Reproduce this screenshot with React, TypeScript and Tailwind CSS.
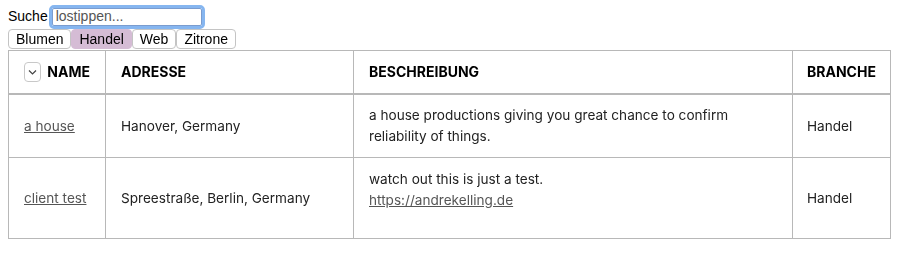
import { useState } from 'react';

interface Client {
  id: string;
  name: string;
  address: string;
  description: string;
  url?: string;
  branch: string;
}

const clients: Client[] = [
  {
    id: '1',
    name: 'a house',
    address: 'Hanover, Germany',
    description: 'a house productions giving you great chance to confirm reliability of things.',
    branch: 'Handel',
  },
  {
    id: '2',
    name: 'client test',
    address: 'Spreestraße, Berlin, Germany',
    description: 'watch out this is just a test.',
    url: 'https://andrekelling.de',
    branch: 'Handel',
  },
];

const branches = ['Blumen', 'Handel', 'Web', 'Zitrone'];

export default function App() {
  const [active, setActive] = useState('Handel');

  return (
    <div className="p-2 pt-[6px] text-[14px] text-black font-['Liberation_Sans',Arial,sans-serif]">
      <div className="flex items-center gap-[4px] h-[21px]">
        <label>Suche</label>
        <input
          className="w-[150px] h-[18px] px-[3px] text-[14px] border border-[#7a9ccf] outline outline-[3px] outline-[#86b6f0] rounded-[2px] placeholder:text-[#555]"
          placeholder="lostippen..."
          autoFocus
        />
      </div>
      <div className="flex mt-[2px] mb-px">
        {branches.map((b) => (
          <button
            key={b}
            onClick={() => setActive(b)}
            className={`h-[20px] px-[7px] border border-[#c4c4c4] rounded-[4px] leading-none text-[14px] ${
              active === b ? 'bg-[#d5bcd5] border-[#d5bcd5]' : 'bg-white'
            }`}
          >
            {b}
          </button>
        ))}
      </div>
      <table className="w-[882px] table-fixed border-collapse font-['Inter',sans-serif] text-[13.6px] text-[#222]">
        <colgroup>
          <col className="w-[97px]" />
          <col className="w-[248px]" />
          <col className="w-[439px]" />
          <col className="w-[98px]" />
        </colgroup>
        <thead>
          <tr className="h-[43px] border-b-2 border-[#b8b8b8] text-[14px] font-bold text-black">
            <th className="border border-[#b8b8b8] px-[15px] text-left">
              <div className="flex items-center gap-[6px]">
                <span className="w-[20px] h-[20px] border border-[#c8c8c8] rounded-[4px] flex items-center justify-center">
                  <svg width="9" height="6" viewBox="0 0 9 6" fill="none" stroke="#444" strokeWidth="1.2">
                    <path d="M1 1.5l3.5 3.5 3.5-3.5" />
                  </svg>
                </span>
                <span>NAME</span>
              </div>
            </th>
            <th className="border border-[#b8b8b8] px-[15px] text-left">ADRESSE</th>
            <th className="border border-[#b8b8b8] px-[15px] text-left">BESCHREIBUNG</th>
            <th className="border border-[#b8b8b8] px-[14px] text-left">BRANCHE</th>
          </tr>
        </thead>
        <tbody>
          {clients.map((c) => (
            <tr key={c.id} className={c.url ? 'h-[81px]' : 'h-[64px]'}>
              <td className="border border-[#b8b8b8] px-[15px]">
                <a href="#" className="underline text-[#555]">{c.name}</a>
              </td>
              <td className="border border-[#b8b8b8] px-[15px]">{c.address}</td>
              <td className={`border border-[#b8b8b8] px-[15px] leading-[21px] ${c.url ? 'align-top pt-[11px]' : ''}`}>
                {c.description}
                {c.url && (
                  <>
                    <br />
                    <a href="#" className="underline text-[#555]">{c.url}</a>
                  </>
                )}
              </td>
              <td className="border border-[#b8b8b8] px-[14px]">{c.branch}</td>
            </tr>
          ))}
        </tbody>
      </table>
    </div>
  );
}
